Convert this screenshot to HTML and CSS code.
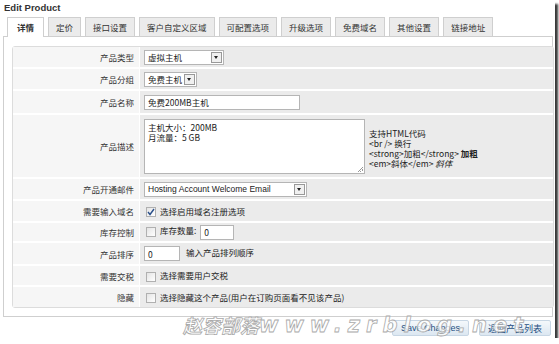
FILE: index.html
```html
<!DOCTYPE html>
<html lang="en">
<head>
    <meta charset="UTF-8">
    <title>Edit Product</title>
    <link rel="stylesheet" href="styles.css">
</head>
<body>
    <div class="frame">
        <h1 class="title">Edit Product</h1>
        <ul class="tabs">
            <li class="active">详情</li>
            <li>定价</li>
            <li>接口设置</li>
            <li>客户自定义区域</li>
            <li>可配置选项</li>
            <li>升级选项</li>
            <li>免费域名</li>
            <li>其他设置</li>
            <li>链接地址</li>
        </ul>
        <div class="tabbox">
            <table class="form">
                <tr class="r22">
                    <td class="label">产品类型</td>
                    <td class="field"><span class="select w80">虚拟主机<i class="arrow"></i></span></td>
                </tr>
                <tr class="r22">
                    <td class="label">产品分组</td>
                    <td class="field"><span class="select w53">免费主机<i class="arrow"></i></span></td>
                </tr>
                <tr class="r24">
                    <td class="label">产品名称</td>
                    <td class="field"><span class="text w156">免费200MB主机</span></td>
                </tr>
                <tr class="r64">
                    <td class="label">产品描述</td>
                    <td class="field">
                        <div class="desc">
                            <div class="textarea">主机大小：200MB<br>月流量：5 GB<i class="grip"></i></div>
                            <div class="help">
                                支持HTML代码<br>
                                &lt;br /&gt; 换行<br>
                                &lt;strong&gt;加粗&lt;/strong&gt; <b>加粗</b><br>
                                &lt;em&gt;斜体&lt;/em&gt; <em>斜体</em>
                            </div>
                        </div>
                    </td>
                </tr>
                <tr class="r22">
                    <td class="label">产品开通邮件</td>
                    <td class="field"><span class="select w163">Hosting Account Welcome Email<i class="arrow"></i></span></td>
                </tr>
                <tr class="r22">
                    <td class="label">需要输入域名</td>
                    <td class="field"><span class="check on"><svg width="8" height="8" viewBox="0 0 8 8"><path d="M1 4 L3 6.5 L7 1" fill="none" stroke="#2a4f8a" stroke-width="1.4"/></svg></span>选择启用域名注册选项</td>
                </tr>
                <tr class="r20">
                    <td class="label">库存控制</td>
                    <td class="field"><span class="check"></span>库存数量: <span class="text w34">0</span></td>
                </tr>
                <tr class="r23">
                    <td class="label">产品排序</td>
                    <td class="field"><span class="text w36">0</span><span class="after">输入产品排列顺序</span></td>
                </tr>
                <tr class="r21">
                    <td class="label">需要交税</td>
                    <td class="field"><span class="check"></span>选择需要用户交税</td>
                </tr>
                <tr class="r20 last">
                    <td class="label">隐藏</td>
                    <td class="field"><span class="check"></span>选择隐藏这个产品(用户在订购页面看不见该产品)</td>
                </tr>
            </table>
        </div>
        <div class="actions">
            <button type="button">Save Changes</button>
            <button type="button">返回产品列表</button>
        </div>
        <div class="watermark"><span class="wm-cn">赵容部落</span><span class="wm-en">www.zrblog.net</span></div>
    </div>
</body>
</html>
```

FILE: styles.css
```css
body {
    margin: 0;
    background: #ffffff;
    font-family: 'Liberation Sans', 'Noto Sans CJK SC', sans-serif;
    font-size: 9px;
    color: #222;
}
.frame {
    position: relative;
    width: 555px;
    height: 338px;
    background: #ffffff;
    box-shadow: 3px 4px 2px #3a3a3a;
    overflow: hidden;
}
.title {
    margin: 0;
    padding: 2px 0 0 4px;
    height: 15px;
    font-size: 9.5px;
    font-weight: bold;
    color: #333;
}
.tabs {
    list-style: none;
    margin: 0;
    padding: 0 0 0 7px;
    display: flex;
    gap: 4px;
    height: 19px;
    font-family: 'Noto Sans CJK SC', sans-serif;
}
.tabs li {
    height: 18px;
    line-height: 18px;
    padding: 0 7px;
    background: #ebebeb;
    border: 1px solid #cfcfcf;
    border-bottom: none;
    color: #333;
    font-size: 8.5px;
}
.tabs li.active {
    background: #ffffff;
    font-weight: bold;
    padding: 0 9px;
    height: 19px;
    position: relative;
    z-index: 1;
}
.tabbox {
    margin: 0 2px 0 3px;
    border: 1px solid #cfcfcf;
    height: 270px;
    padding: 9px 0 0 8px;
    background: #ffffff;
}
.form {
    width: 542px;
    border-collapse: separate;
    border-spacing: 0;
    border: 1px solid #dcdcdc;
    border-radius: 3px;
    font-family: 'Noto Sans CJK SC', sans-serif;
    font-size: 8.5px;
}
.form td {
    padding: 0;
    border-bottom: 2px solid #ffffff;
}
.form tr.last td {
    border-bottom: none;
}
.r20 { height: 20px; }
.r21 { height: 21px; }
.r22 { height: 22px; }
.r23 { height: 23px; }
.r24 { height: 24px; }
.r64 { height: 64px; }
.label {
    width: 121px;
    text-align: right;
    padding-right: 5px !important;
    background: #f6f6f6;
    color: #333;
    border-right: 1px solid #ffffff;
}
.field {
    background: #ebebeb;
    padding-left: 4px !important;
    color: #222;
}
.select, .text {
    display: inline-flex;
    align-items: center;
    box-sizing: border-box;
    height: 15px;
    background: #ffffff;
    border: 1px solid #b5b5b5;
    padding-left: 3px;
    vertical-align: middle;
    position: relative;
    font-size: 8.5px;
}
.select {
    font-family: 'Liberation Sans', 'Noto Sans CJK SC', sans-serif;
}
.w80 { width: 80px; }
.w53 { width: 53px; }
.w156 { width: 156px; }
.w163 { width: 163px; }
.w34 { width: 34px; }
.w36 { width: 36px; }
.arrow {
    position: absolute;
    right: 1px;
    top: 1px;
    width: 9px;
    height: 9px;
    border: 1px solid #999;
    background: #f0f0f0;
}
.arrow::after {
    content: '';
    position: absolute;
    left: 2px;
    top: 3px;
    border-left: 2.5px solid transparent;
    border-right: 2.5px solid transparent;
    border-top: 3px solid #222;
}
.desc {
    display: flex;
    align-items: center;
    gap: 4px;
}
.textarea {
    position: relative;
    box-sizing: border-box;
    width: 221px;
    height: 55px;
    background: #ffffff;
    border: 1px solid #b5b5b5;
    padding: 2px 3px;
    line-height: 10px;
    font-size: 8.5px;
}
.grip {
    position: absolute;
    right: 1px;
    bottom: 1px;
    width: 5px;
    height: 5px;
    background: linear-gradient(135deg, transparent 45%, #999 45%, #999 55%, transparent 55%, transparent 70%, #999 70%, #999 80%, transparent 80%);
}
.help {
    line-height: 10px;
    font-size: 8.5px;
    margin-top: 4px;
}
.help b {
    font-weight: bold;
}
.check {
    display: inline-flex;
    align-items: center;
    justify-content: center;
    box-sizing: border-box;
    width: 10px;
    height: 10px;
    margin: 0 4px 0 2px;
    border: 1px solid #b0b0b0;
    background: linear-gradient(135deg, #e4e4e4, #ffffff);
    vertical-align: middle;
}
.check + .text {
    margin-left: 2px;
}
.after {
    margin-left: 6px;
}
.actions {
    display: flex;
    justify-content: flex-end;
    gap: 10px;
    padding: 3px 4px 0 0;
}
.actions button {
    height: 16px;
    padding: 0 8px;
    border: 1px solid #c7d6e4;
    border-radius: 2px;
    background: linear-gradient(#f4f8fb, #dce7f1);
    color: #1f4f82;
    font-family: 'Liberation Sans', 'Noto Sans CJK SC', sans-serif;
    font-size: 9px;
}
.watermark {
    position: absolute;
    left: 183px;
    top: 313px;
    height: 24px;
    display: flex;
    align-items: center;
    font-weight: bold;
    font-style: italic;
    color: rgba(255, 255, 255, 0.75);
    -webkit-text-stroke: 0.8px #aaaaaa;
    white-space: nowrap;
}
.wm-cn {
    font-family: 'Noto Sans CJK SC', sans-serif;
    font-size: 19px;
    line-height: 24px;
}
.wm-en {
    font-family: 'DejaVu Sans', sans-serif;
    font-size: 21px;
    line-height: 24px;
    letter-spacing: 6px;
}
```
